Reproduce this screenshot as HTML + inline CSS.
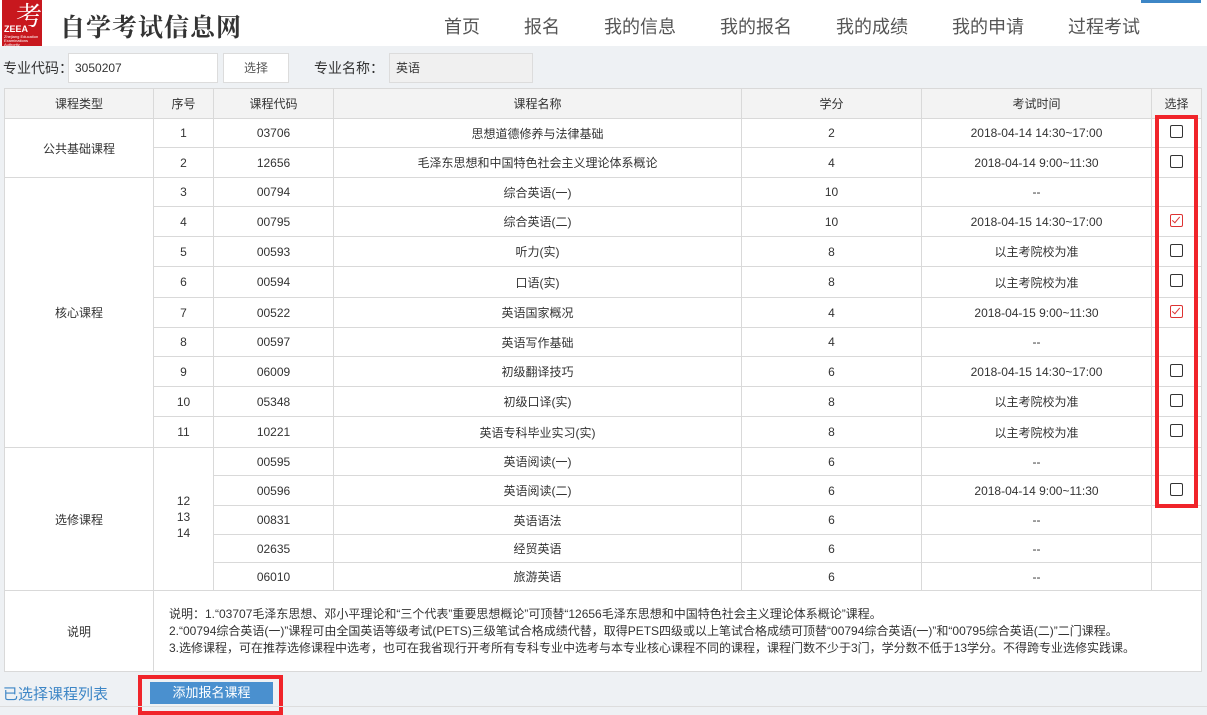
<!DOCTYPE html>
<html><head><meta charset="utf-8"><style>
*{margin:0;padding:0;box-sizing:border-box}
body{width:1207px;height:711px;overflow:hidden;background:#eef1f4;font-family:"Liberation Sans","Noto Sans CJK SC",sans-serif;font-size:12px;color:#333;position:relative}
.hdr{position:absolute;left:0;top:0;width:1207px;height:46px;background:#fff}
.logo{position:absolute;left:2px;top:0;width:40px;height:46px;background:#c8181e;color:#fff}
.title{position:absolute;left:60px;top:8px;font-size:25px;font-family:"Noto Serif CJK SC",serif;font-weight:bold;color:#333;letter-spacing:1px}
.nav{position:absolute;top:13px;font-size:18px;color:#555}
.bar{position:absolute;left:1141px;top:0;width:60px;height:3px;background:#3d86c6}
.lbl{position:absolute;font-size:14px;color:#333}
.inp{position:absolute;background:#fff;border:1px solid #dcdcdc;font-size:12px;line-height:28px;padding-left:6px}
table{position:absolute;left:4px;top:88px;border-collapse:collapse;table-layout:fixed;background:#fff}
td,th{border:1px solid #d9d9d9;text-align:center;font-weight:normal;font-size:12px}
th{background:#f3f3f3;height:30px}
.cb{display:inline-block;width:13px;height:13px;border:1px solid #333;border-radius:2px;vertical-align:middle;background:#fff;margin-top:-4px}
.ck{border-color:#d33;position:relative}
.ck:after{content:"";position:absolute;left:3px;top:0px;width:3px;height:7px;border:solid #d33;border-width:0 1px 1px 0;transform:rotate(40deg)}
.red{position:absolute;border:4px solid #f0242a}
</style></head><body>
<div class="hdr">
<div class="logo"><div style="position:absolute;left:14px;top:-4px;font-size:26px;font-family:'Noto Serif CJK SC',serif">考</div><div style="position:absolute;left:2px;top:24px;font-size:9px;font-weight:bold">ZEEA</div><div style="position:absolute;left:2px;top:35px;font-size:4px;line-height:4px">Zhejiang Education<br>Examinations Authority</div></div>
<div class="title">自学考试信息网</div>
<div class="nav" style="left:444px">首页</div>
<div class="nav" style="left:524px">报名</div>
<div class="nav" style="left:604px">我的信息</div>
<div class="nav" style="left:720px">我的报名</div>
<div class="nav" style="left:836px">我的成绩</div>
<div class="nav" style="left:952px">我的申请</div>
<div class="nav" style="left:1068px">过程考试</div>
<div class="bar"></div>
</div>
<div class="lbl" style="left:3px;top:58px">专业代码：</div>
<div class="inp" style="left:68px;top:53px;width:150px;height:30px">3050207</div>
<div class="inp" style="left:223px;top:53px;width:66px;height:30px;text-align:center;padding:0;color:#555">选择</div>
<div class="lbl" style="left:314px;top:58px">专业名称：</div>
<div class="inp" style="left:389px;top:53px;width:144px;height:30px;background:#f0f0f0">英语</div>
<table>
<colgroup><col style="width:149px"><col style="width:60px"><col style="width:120px"><col style="width:408px"><col style="width:180px"><col style="width:230px"><col style="width:50px"></colgroup>
<tr><th>课程类型</th><th>序号</th><th>课程代码</th><th>课程名称</th><th>学分</th><th>考试时间</th><th>选择</th></tr>
<tr style="height:29px"><td rowspan="2">公共基础课程</td><td>1</td><td>03706</td><td>思想道德修养与法律基础</td><td>2</td><td>2018-04-14 14:30~17:00</td><td><span class="cb"></span></td></tr>
<tr style="height:30px"><td>2</td><td>12656</td><td>毛泽东思想和中国特色社会主义理论体系概论</td><td>4</td><td>2018-04-14 9:00~11:30</td><td><span class="cb"></span></td></tr>
<tr style="height:29px"><td rowspan="9">核心课程</td><td>3</td><td>00794</td><td>综合英语(一)</td><td>10</td><td>--</td><td></td></tr>
<tr style="height:30px"><td>4</td><td>00795</td><td>综合英语(二)</td><td>10</td><td>2018-04-15 14:30~17:00</td><td><span class="cb ck"></span></td></tr>
<tr style="height:30px"><td>5</td><td>00593</td><td>听力(实)</td><td>8</td><td>以主考院校为准</td><td><span class="cb"></span></td></tr>
<tr style="height:31px"><td>6</td><td>00594</td><td>口语(实)</td><td>8</td><td>以主考院校为准</td><td><span class="cb"></span></td></tr>
<tr style="height:30px"><td>7</td><td>00522</td><td>英语国家概况</td><td>4</td><td>2018-04-15 9:00~11:30</td><td><span class="cb ck"></span></td></tr>
<tr style="height:29px"><td>8</td><td>00597</td><td>英语写作基础</td><td>4</td><td>--</td><td></td></tr>
<tr style="height:30px"><td>9</td><td>06009</td><td>初级翻译技巧</td><td>6</td><td>2018-04-15 14:30~17:00</td><td><span class="cb"></span></td></tr>
<tr style="height:30px"><td>10</td><td>05348</td><td>初级口译(实)</td><td>8</td><td>以主考院校为准</td><td><span class="cb"></span></td></tr>
<tr style="height:31px"><td>11</td><td>10221</td><td>英语专科毕业实习(实)</td><td>8</td><td>以主考院校为准</td><td><span class="cb"></span></td></tr>
<tr style="height:28px"><td rowspan="5">选修课程</td><td rowspan="5" style="line-height:16px;padding-bottom:4px">12<br>13<br>14</td><td>00595</td><td>英语阅读(一)</td><td>6</td><td>--</td><td></td></tr>
<tr style="height:30px"><td>00596</td><td>英语阅读(二)</td><td>6</td><td>2018-04-14 9:00~11:30</td><td><span class="cb"></span></td></tr>
<tr style="height:29px"><td>00831</td><td>英语语法</td><td>6</td><td>--</td><td></td></tr>
<tr style="height:28px"><td>02635</td><td>经贸英语</td><td>6</td><td>--</td><td></td></tr>
<tr style="height:28px"><td>06010</td><td>旅游英语</td><td>6</td><td>--</td><td></td></tr>
<tr style="height:81px"><td>说明</td><td colspan="6" style="text-align:left;padding-left:15px;line-height:17px">说明：1.“03707毛泽东思想、邓小平理论和“三个代表”重要思想概论”可顶替“12656毛泽东思想和中国特色社会主义理论体系概论”课程。<br>2.“00794综合英语(一)”课程可由全国英语等级考试(PETS)三级笔试合格成绩代替，取得PETS四级或以上笔试合格成绩可顶替“00794综合英语(一)”和“00795综合英语(二)”二门课程。<br>3.选修课程，可在推荐选修课程中选考，也可在我省现行开考所有专科专业中选考与本专业核心课程不同的课程，课程门数不少于3门，学分数不低于13学分。不得跨专业选修实践课。</td></tr>
</table>
<div class="red" style="left:1155px;top:115px;width:43px;height:393px"></div>
<div style="position:absolute;left:3px;top:683px;font-size:15px;color:#3d86c6">已选择课程列表</div>
<div class="red" style="left:138px;top:675px;width:145px;height:40px"></div>
<div style="position:absolute;left:150px;top:682px;width:123px;height:22px;background:#4a90cf;color:#fff;font-size:13px;text-align:center;line-height:22px">添加报名课程</div>
<div style="position:absolute;left:0;top:706px;width:1207px;height:1px;background:#ddd"></div>
</body></html>
